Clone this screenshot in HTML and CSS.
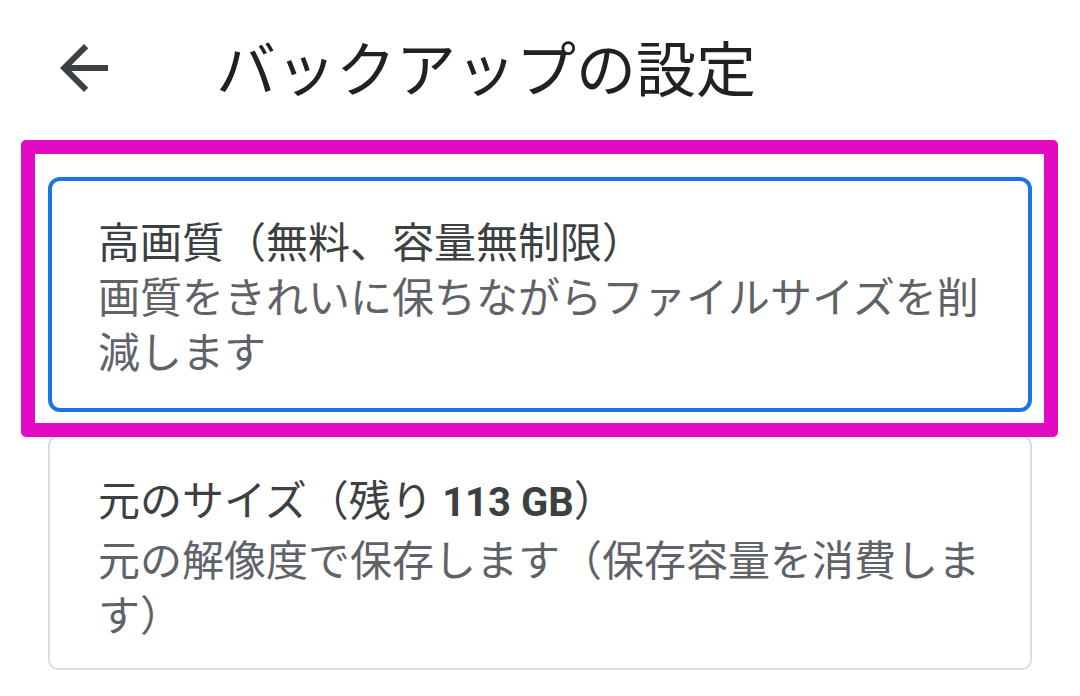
FILE: index.html
```html
<!DOCTYPE html>
<html lang="ja">
<head>
<meta charset="utf-8">
<title>バックアップの設定</title>
<link rel="stylesheet" href="styles.css">
</head>
<body>
<header class="appbar">
  <button class="back" aria-label="戻る">
    <svg viewBox="0 0 24 24" width="72" height="72"><path d="M20 11H7.83l5.59-5.59L12 4l-8 8 8 8 1.41-1.41L7.83 13H20v-2z" fill="#3c4043"/></svg>
  </button>
  <h1 class="title">バックアップの設定</h1>
</header>
<main class="options">
  <div class="highlight-wrap">
    <div class="option selected">
      <div class="opt-title">高画質（無料、容量無制限）</div>
      <div class="opt-desc">画質をきれいに保ちながらファイルサイズを削減します</div>
    </div>
    <div class="highlight"></div>
  </div>
  <div class="option">
    <div class="opt-title">元のサイズ（残り <span class="num">113 GB</span>）</div>
    <div class="opt-desc">元の解像度で保存します（保存容量を消費します）</div>
  </div>
</main>
</body>
</html>
```
FILE: styles.css
```css
html, body {
  margin: 0;
  padding: 0;
  background: #ffffff;
}
body {
  font-family: "Noto Sans CJK JP", "Noto Sans", Roboto, sans-serif;
  width: 1080px;
  height: 696px;
  overflow: hidden;
}
.appbar {
  height: 136px;
  display: flex;
  align-items: center;
  padding-left: 48px;
}
.back {
  width: 72px;
  height: 72px;
  padding: 0;
  border: 0;
  background: none;
  display: flex;
}
.title {
  margin: 0 0 4px 96px;
  font-size: 60px;
  font-weight: 400;
  color: #202124;
  line-height: 1;
}
.options {
  padding: 41px 48px 0 48px;
  display: flex;
  flex-direction: column;
  gap: 23px;
}
.highlight-wrap {
  position: relative;
}
.highlight {
  position: absolute;
  left: -27px;
  top: -37px;
  right: -26px;
  bottom: -25px;
  border: 14px solid #e20ac2;
  border-radius: 5px;
  pointer-events: none;
}
.option {
  border: 2px solid #dadce0;
  border-radius: 10px;
  padding: 33px 42px 28px 48px;
  font-size: 42px;
  line-height: 55px;
}
.option.selected {
  border: 4px solid #1a73e8;
  border-radius: 12px;
  padding: 31px 40px 31px 46px;
}
.opt-title {
  color: #3c4043;
}
.opt-desc {
  color: #5f6368;
}
.num {
  font-family: Roboto, "Noto Sans", sans-serif;
  font-weight: 700;
  font-size: 40px;
}
```
